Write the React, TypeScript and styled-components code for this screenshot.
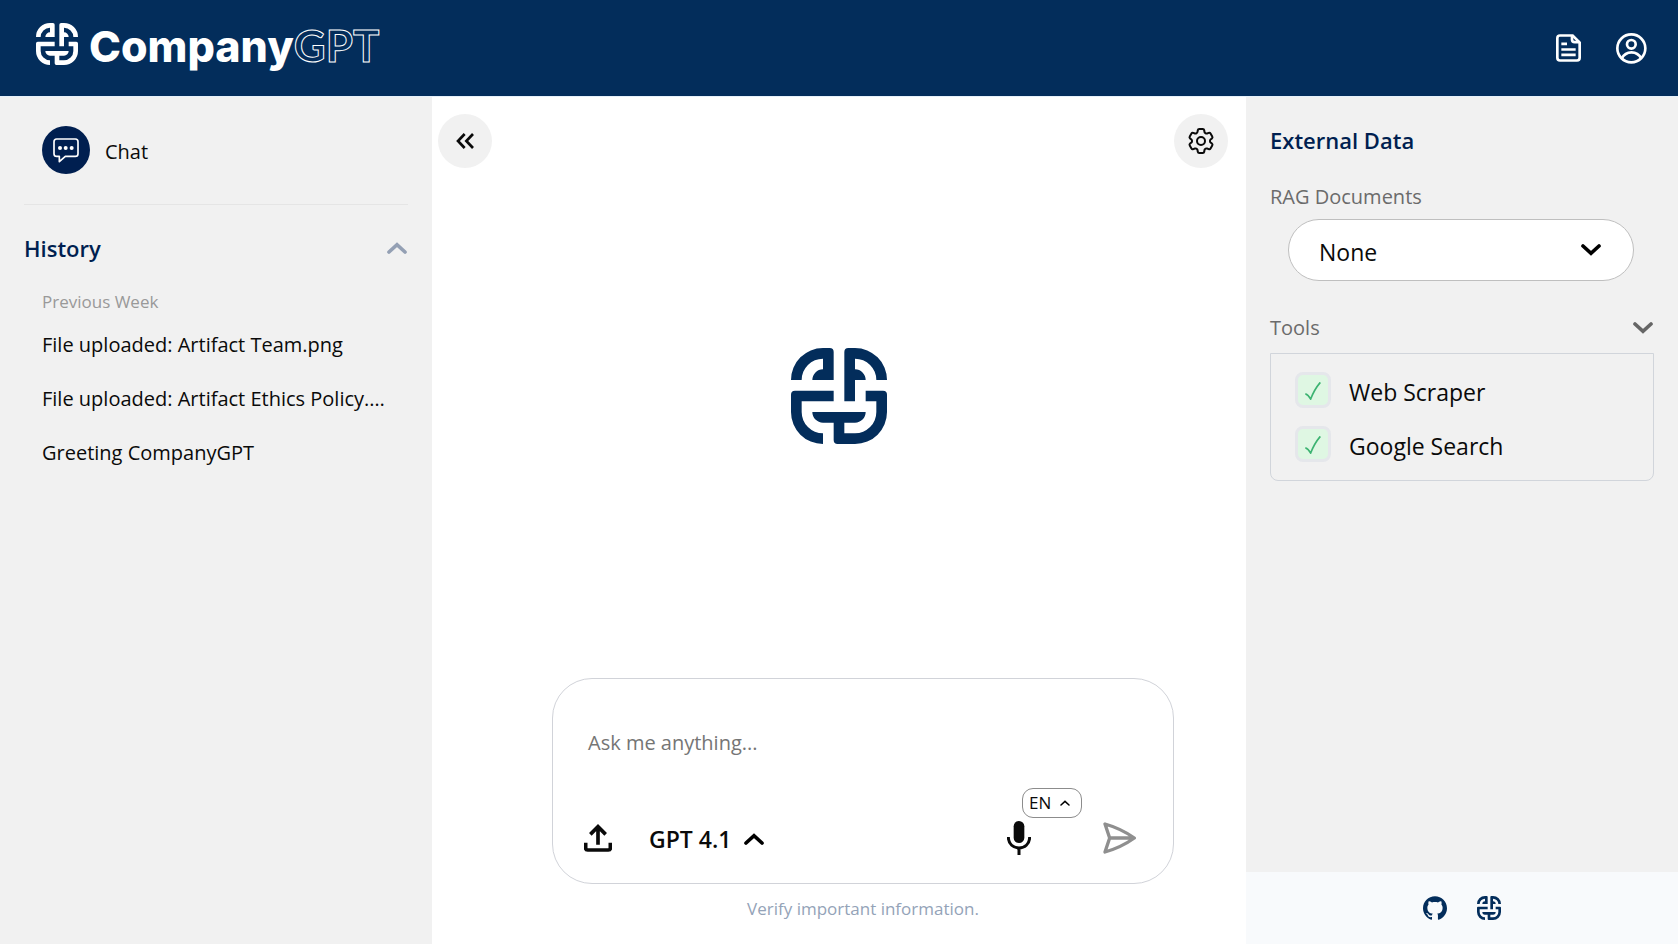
import React from "react";
import styled, { createGlobalStyle } from "styled-components";
import { SiGithub } from "react-icons/si";
import { HiOutlineCog6Tooth } from "react-icons/hi2";

const GlobalStyle = createGlobalStyle`
  *, *::before, *::after { box-sizing: border-box; }
  body {
    margin: 0;
    background: #ffffff;
    color: #0a0a0a;
    font-family: "Segoe UI", "Open Sans", "Noto Sans", sans-serif;
    font-size: 20px;
    line-height: 30px;
  }
  button, select, textarea, input { font: inherit; color: inherit; margin: 0; }
  button { border: 0; padding: 0; background: none; cursor: pointer; }
  svg { display: block; flex: none; }
  h1, h2, h3, p, ul { margin: 0; padding: 0; }
`;

const Page = styled.div`
  min-height: 100vh;
  display: flex;
  flex-direction: column;
`;

const Header = styled.header`
  display: flex;
  align-items: center;
  justify-content: space-between;
  height: 97px;
  padding: 0 31px 0 36px;
  background: #032d5b;
  border-bottom: 1px solid #e6f1fb;
  color: #ffffff;
`;

const Brand = styled.a`
  display: flex;
  align-items: flex-start;
  gap: 11px;
  padding-bottom: 6px;
  color: inherit;
  text-decoration: none;
`;

const Wordmark = styled.span`
  display: flex;
  align-items: baseline;
  font-family: Inter, sans-serif;
  font-size: 43px;
  line-height: 44px;
  font-weight: 800;
`;

const Outlined = styled.span`
  font-family: Lato, sans-serif;
  font-size: 44px;
  font-weight: 700;
  color: transparent;
  -webkit-text-stroke: 1px #ffffff;
`;

const HeaderActions = styled.div`
  display: flex;
  align-items: center;
  gap: 35px;
`;

const Columns = styled.div`
  flex: 1;
  display: grid;
  grid-template-columns: 432px minmax(0, 1fr) 432px;
`;

const Sidebar = styled.aside`
  display: flex;
  flex-direction: column;
  background: #f1f1f1;
`;

const SidebarBody = styled.div`
  flex: 1;
  display: flex;
  flex-direction: column;
  padding: 24px;
`;

const ChatLink = styled.a`
  display: flex;
  align-items: center;
  gap: 15px;
  margin: 5px 18px 30px;
  color: inherit;
  text-decoration: none;
`;

const ChatBadge = styled.span`
  display: grid;
  place-items: center;
  width: 48px;
  height: 48px;
  border-radius: 50%;
  background: #001f50;
  color: #ffffff;
`;

const ChatLabel = styled.span`
  padding-top: 3px;
`;

const Divider = styled.hr`
  width: 100%;
  margin: 0;
  border: 0;
  border-top: 1px solid #e5e5e5;
`;

const SectionTitle = styled.h2`
  font-size: 22px;
  line-height: 32px;
  font-weight: 600;
  color: #001f50;
`;

const SectionToggle = styled.button`
  display: flex;
  align-items: center;
  justify-content: space-between;
  width: 100%;
  padding-right: 1px;
  text-align: left;
`;

const HistoryHead = styled.div`
  margin: 27px 0 23px;
`;

const HistoryGroup = styled.h3`
  padding-left: 18px;
  font-size: 17px;
  line-height: 30px;
  font-weight: 400;
  color: #999999;
`;

const HistoryList = styled.ul`
  list-style: none;
`;

const HistoryLink = styled.a`
  display: block;
  padding: 13px 18px 11px;
  color: inherit;
  text-decoration: none;
  white-space: nowrap;
  overflow: hidden;
  text-overflow: ellipsis;
`;

const Main = styled.main`
  display: flex;
  flex-direction: column;
`;

const Canvas = styled.section`
  flex: 1;
  display: grid;
  grid-template-columns: 1fr auto 1fr;
  align-items: start;
  padding: 17px 18px 0;
`;

const RoundButton = styled.button<{ $side: "left" | "right" }>`
  display: grid;
  place-items: center;
  width: 54px;
  height: 54px;
  border-radius: 50%;
  background: #f1f1f1;
  justify-self: ${(p) => (p.$side === "left" ? "start" : "end")};
  margin-left: ${(p) => (p.$side === "left" ? "-12px" : "0")};
`;

const Emblem = styled.div`
  align-self: center;
  color: #032d5b;
`;

const ComposerArea = styled.div`
  padding: 0 72px 21px 120px;
  text-align: center;
`;

const Composer = styled.form`
  display: flex;
  flex-direction: column;
  justify-content: space-between;
  height: 206px;
  padding: 49px 37px 25px 31px;
  border: 1px solid #d1d3d9;
  border-radius: 40px;
  text-align: left;
`;

const Prompt = styled.textarea`
  display: block;
  width: 100%;
  height: 32px;
  padding: 0 4px;
  border: 0;
  outline: 0;
  resize: none;
  overflow: hidden;
  background: transparent;
  &::placeholder { color: #757575; opacity: 1; }
`;

const Controls = styled.div`
  display: flex;
  align-items: center;
  height: 40px;
`;

const ModelButton = styled.button`
  display: flex;
  align-items: center;
  gap: 13px;
  margin: 0 auto 0 37px;
  padding-top: 2px;
  font-size: 23px;
  font-weight: 600;
`;

const MicSlot = styled.div`
  position: relative;
  display: flex;
  margin-right: 72px;
`;

const LanguageButton = styled.button`
  position: absolute;
  left: 15px;
  bottom: 37px;
  display: flex;
  align-items: center;
  gap: 9px;
  height: 30px;
  padding: 0 11px 0 6px;
  border: 1px solid #8c8c8c;
  border-radius: 11px;
  background: #ffffff;
  font-size: 17px;
  line-height: 28px;
`;

const Notice = styled.p`
  padding-top: 11px;
  font-size: 17px;
  line-height: 28px;
  color: #94a3b8;
`;

const DataTitle = styled(SectionTitle)`
  padding-top: 3px;
`;

const FieldLabel = styled.label`
  display: block;
  margin-top: 26px;
  color: #6b6b6b;
`;

const SelectWrap = styled.div`
  position: relative;
  margin: 7px 20px 0 18px;
`;

const SourceSelect = styled.select`
  appearance: none;
  display: block;
  width: 100%;
  height: 62px;
  padding: 3px 60px 0 30px;
  border: 1px solid #bfbfbf;
  border-radius: 31px;
  background: #ffffff;
  font-size: 23px;
`;

const SelectArrow = styled.span`
  position: absolute;
  right: 33px;
  top: 25px;
  pointer-events: none;
`;

const ToolsHead = styled.div`
  margin-top: 32px;
  color: #6b6b6b;
`;

const ToolsBox = styled.div`
  display: flex;
  flex-direction: column;
  gap: 18px;
  margin-top: 10px;
  padding: 18px 24px;
  border: 1px solid #d1d5db;
  border-radius: 0 0 8px 8px;
`;

const ToolRow = styled.label`
  position: relative;
  display: flex;
  align-items: center;
  gap: 18px;
  height: 36px;
  font-size: 23px;
  line-height: 36px;
`;

const ToolName = styled.span`
  padding-top: 3px;
`;

const ToolCheck = styled.input`
  appearance: none;
  width: 36px;
  height: 36px;
  border: 3px solid #e5e7eb;
  border-radius: 8px;
  background: #ffffff;
  &:checked { background: #dff7e3; }
  & + svg { visibility: hidden; }
  &:checked + svg { visibility: visible; }
`;

const ToolMark = styled.svg`
  position: absolute;
  left: 10px;
  top: 10px;
  pointer-events: none;
`;

const SideFooter = styled.footer`
  display: flex;
  align-items: center;
  justify-content: center;
  gap: 30px;
  height: 72px;
  background: #f8fafc;
  color: #032d5b;
`;

const FooterLink = styled.a`
  color: inherit;
`;

function LogoMark({ size }: { size: number }) {
  return (
    <svg width={size} height={size} viewBox="0 0 288 288" fill="currentColor" aria-hidden="true">
      <path d="M0 96A96 96 0 0 1 96 0H116Q128 0 128 12V96H64A32 32 0 0 1 96 64V32A64 64 0 0 0 32 96Z" />
      <path d="M160 160V12Q160 0 172 0H192A96 96 0 0 1 288 96H256A64 64 0 0 0 192 32V64A32 32 0 0 1 224 96H192V160Z" />
      <path d="M12 128H128V160H32V192A64 64 0 0 0 96 256V288A96 96 0 0 1 0 192V140Q0 128 12 128Z" />
      <path d="M64 192H224A32 32 0 0 1 192 224H160V256H192A64 64 0 0 0 256 192V160H224V128H276Q288 128 288 140V192A96 96 0 0 1 192 288H140Q128 288 128 276V224H96A32 32 0 0 1 64 192Z" />
    </svg>
  );
}

function Chevron({ up, color, small }: { up?: boolean; color: string; small?: boolean }) {
  return (
    <svg
      width={small ? 10 : 20}
      height={small ? 6 : 12}
      viewBox="0 0 60 36"
      fill="none"
      stroke={color}
      strokeWidth={small ? 9 : 11}
      strokeLinecap="round"
      aria-hidden="true"
    >
      <path d={up ? "M6 30L30 8L54 30" : "M6 6L30 28L54 6"} />
    </svg>
  );
}

function DocumentIcon() {
  return (
    <svg width="25" height="28" viewBox="0 0 75 83" fill="none" stroke="currentColor" strokeWidth="8" aria-hidden="true">
      <path d="M12 4H50L71 25V71Q71 79 63 79H12Q4 79 4 71V12Q4 4 12 4Z" />
      <path d="M48 4V16Q48 24 56 24H71M16 29H33M16 46H59M16 62H59" />
    </svg>
  );
}

function ProfileIcon() {
  return (
    <svg width="31" height="31" viewBox="0 0 93 93" fill="none" stroke="currentColor" strokeWidth="8" aria-hidden="true">
      <circle cx="46" cy="46" r="42" />
      <circle cx="46" cy="34" r="13" />
      <path d="M17 77C30 52 63 52 76 77" />
    </svg>
  );
}

function ChatIcon() {
  return (
    <svg width="26" height="25" viewBox="0 0 78 75" fill="none" stroke="currentColor" strokeWidth="5" strokeLinejoin="round" aria-hidden="true">
      <path d="M11 3H67Q75 3 75 11V47Q75 55 67 55H37L19 71V55H11Q3 55 3 47V11Q3 3 11 3Z" />
      <g fill="currentColor" stroke="none">
        <circle cx="21" cy="30" r="6" />
        <circle cx="38" cy="30" r="6" />
        <circle cx="56" cy="30" r="6" />
      </g>
    </svg>
  );
}

function CollapseIcon() {
  return (
    <svg width="18" height="16" viewBox="0 0 54 48" fill="none" stroke="currentColor" strokeWidth="8" aria-hidden="true">
      <path d="M26 3L6 24L26 45M51 3L31 24L51 45" />
    </svg>
  );
}

function UploadIcon() {
  return (
    <svg width="28" height="28" viewBox="0 0 84 84" fill="none" stroke="currentColor" strokeWidth="11" aria-hidden="true">
      <path d="M42 62V8M19 31L42 8L65 31" />
      <path d="M5 56V72Q5 78 11 78H73Q79 78 79 72V56" />
    </svg>
  );
}

function MicIcon() {
  return (
    <svg width="24" height="34" viewBox="0 0 72 102" aria-hidden="true">
      <rect x="20" y="0" width="32" height="66" rx="16" fill="currentColor" />
      <path d="M4 48C4 92 68 92 68 48M36 80V102" fill="none" stroke="currentColor" strokeWidth="9" />
    </svg>
  );
}

function SendIcon() {
  return (
    <svg width="33" height="32" viewBox="0 0 99 96" fill="none" stroke="#8f8f8f" strokeWidth="10" strokeLinecap="round" strokeLinejoin="round" aria-hidden="true">
      <path d="M6 6Q55 20 94 48Q55 76 6 90L20 48ZM20 48H92" />
    </svg>
  );
}

const history = [
  "File uploaded: Artifact Team.png",
  "File uploaded: Artifact Ethics Policy.pdf",
  "Greeting CompanyGPT",
];

const tools = ["Web Scraper", "Google Search"];

export default function App() {
  return (
    <Page>
      <GlobalStyle />
      <Header>
        <Brand href="#" aria-label="CompanyGPT home">
          <LogoMark size={42} />
          <Wordmark>
            Company<Outlined>GPT</Outlined>
          </Wordmark>
        </Brand>
        <HeaderActions>
          <button type="button" aria-label="Documents"><DocumentIcon /></button>
          <button type="button" aria-label="Profile"><ProfileIcon /></button>
        </HeaderActions>
      </Header>
      <Columns>
        <Sidebar>
          <SidebarBody>
            <ChatLink href="#chat">
              <ChatBadge><ChatIcon /></ChatBadge>
              <ChatLabel>Chat</ChatLabel>
            </ChatLink>
            <Divider />
            <HistoryHead>
              <SectionToggle type="button" aria-expanded="true">
                <SectionTitle as="span">History</SectionTitle>
                <Chevron up color="#94a0b4" />
              </SectionToggle>
            </HistoryHead>
            <HistoryGroup>Previous Week</HistoryGroup>
            <HistoryList>
              {history.map((title) => (
                <li key={title}>
                  <HistoryLink href="#chat">{title}</HistoryLink>
                </li>
              ))}
            </HistoryList>
          </SidebarBody>
        </Sidebar>
        <Main>
          <Canvas>
            <RoundButton type="button" $side="left" aria-label="Collapse sidebar"><CollapseIcon /></RoundButton>
            <Emblem><LogoMark size={96} /></Emblem>
            <RoundButton type="button" $side="right" aria-label="Settings"><HiOutlineCog6Tooth size={32} /></RoundButton>
          </Canvas>
          <ComposerArea>
            <Composer onSubmit={(e: React.FormEvent) => e.preventDefault()}>
              <Prompt aria-label="Message" rows={1} placeholder="Ask me anything..." />
              <Controls>
                <button type="button" aria-label="Upload file"><UploadIcon /></button>
                <ModelButton type="button" aria-haspopup="listbox">
                  GPT 4.1
                  <Chevron up color="#000000" />
                </ModelButton>
                <MicSlot>
                  <button type="button" aria-label="Dictate"><MicIcon /></button>
                  <LanguageButton type="button" aria-haspopup="listbox">
                    EN
                    <Chevron up small color="#000000" />
                  </LanguageButton>
                </MicSlot>
                <button type="submit" aria-label="Send"><SendIcon /></button>
              </Controls>
            </Composer>
            <Notice>Verify important information.</Notice>
          </ComposerArea>
        </Main>
        <Sidebar>
          <SidebarBody>
            <DataTitle>External Data</DataTitle>
            <FieldLabel htmlFor="rag">RAG Documents</FieldLabel>
            <SelectWrap>
              <SourceSelect id="rag" defaultValue="None">
                <option>None</option>
              </SourceSelect>
              <SelectArrow><Chevron color="#000000" /></SelectArrow>
            </SelectWrap>
            <ToolsHead>
              <SectionToggle type="button" aria-expanded="true">
                Tools
                <Chevron color="#666666" />
              </SectionToggle>
            </ToolsHead>
            <ToolsBox>
              {tools.map((name) => (
                <ToolRow key={name}>
                  <ToolCheck type="checkbox" defaultChecked />
                  <ToolMark width="16" height="18" viewBox="0 0 48 54" fill="none" stroke="#3cb371" strokeWidth="5" aria-hidden="true">
                    <path d="M1 35Q10 38 17 51Q28 22 46 1" />
                  </ToolMark>
                  <ToolName>{name}</ToolName>
                </ToolRow>
              ))}
            </ToolsBox>
          </SidebarBody>
          <SideFooter>
            <FooterLink href="#github" aria-label="GitHub"><SiGithub size={24} /></FooterLink>
            <FooterLink href="#about" aria-label="CompanyGPT"><LogoMark size={24} /></FooterLink>
          </SideFooter>
        </Sidebar>
      </Columns>
    </Page>
  );
}
